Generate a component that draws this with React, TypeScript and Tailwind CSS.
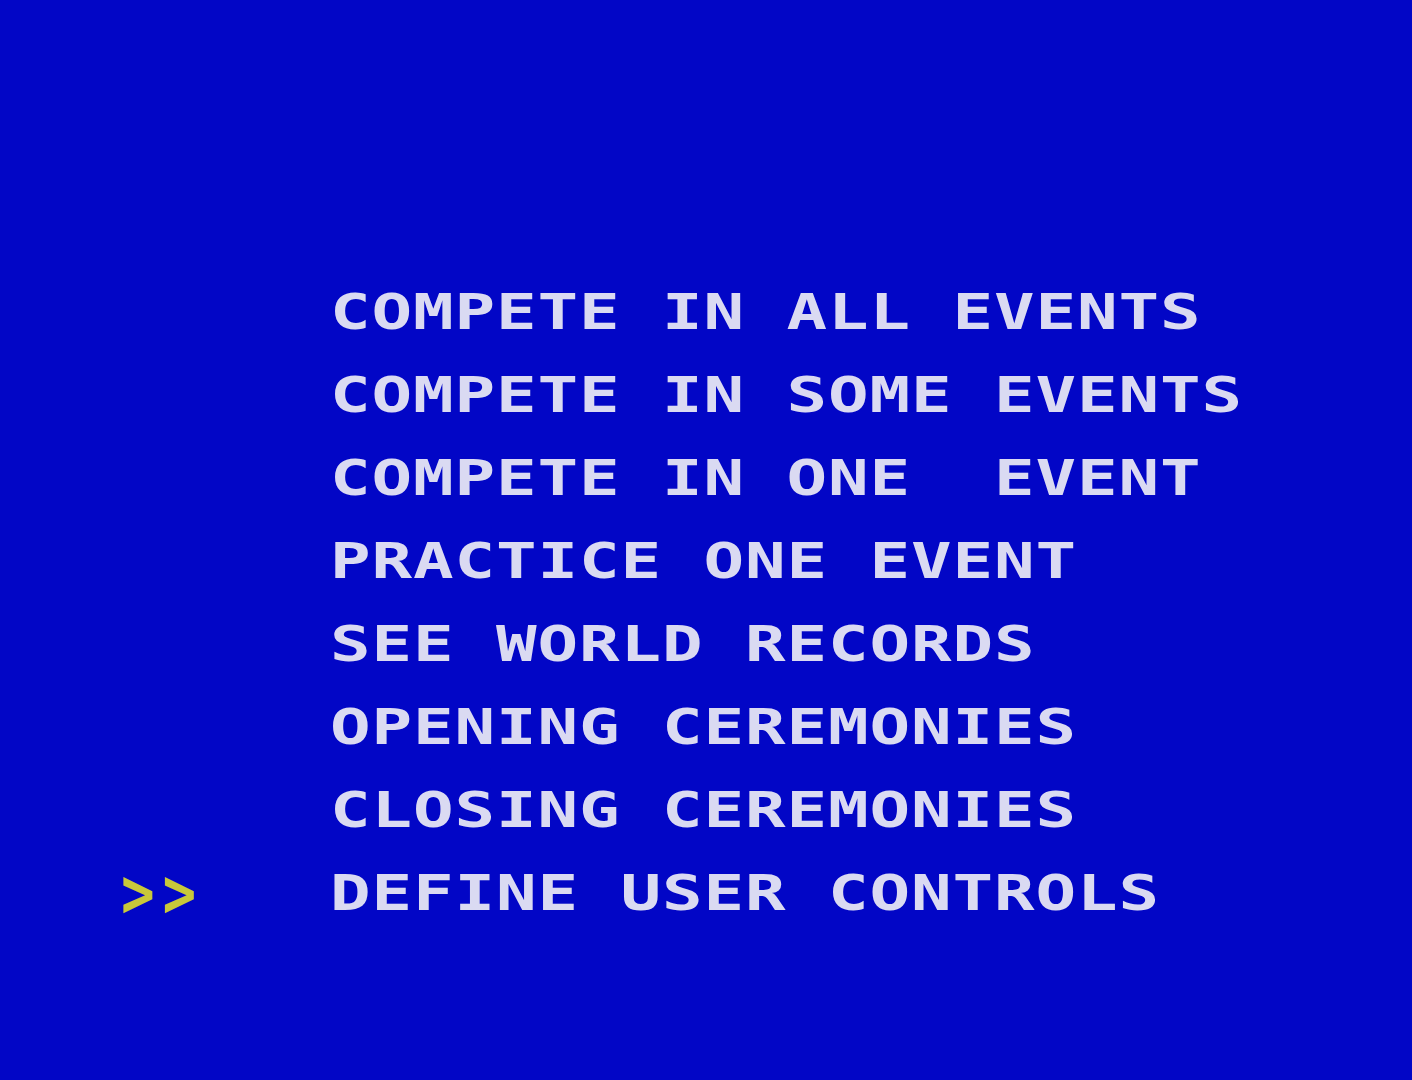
import { FC } from "react";

const items = [
  "COMPETE IN ALL EVENTS",
  "COMPETE IN SOME EVENTS",
  "COMPETE IN ONE  EVENT",
  "PRACTICE ONE EVENT",
  "SEE WORLD RECORDS",
  "OPENING CEREMONIES",
  "CLOSING CEREMONIES",
  "DEFINE USER CONTROLS",
];

const selected = 7;

const mono = "[font-family:'DejaVu_Sans_Mono','Liberation_Mono',monospace]";

// wide blocky glyphs: bold mono stretched horizontally to fill an 8x8 cell
const glyph = `inline-block origin-left scale-x-[1.35] whitespace-pre font-bold text-[50px] leading-none tracking-[0.64px] ${mono}`;

// cursor chevrons are taller and narrower than the menu letters
const cursor = `inline-block origin-left scale-x-[0.8] whitespace-pre font-bold text-[70px] leading-none tracking-[9.8px] ${mono}`;

const App: FC = () => (
  <div className="w-[1412px] h-[1080px] overflow-hidden bg-[#0206c6] pt-[270px]">
    <ul className="flex flex-col">
      {items.map((label, i) => (
        <li key={label} className="flex h-[83px] items-center">
          <div className="flex w-[330px] items-center pl-[121px]">
            {i === selected && <span className={`${cursor} text-[#c8c83a]`}>&gt;&gt;</span>}
          </div>
          <span className={`${glyph} text-[#dadaf2]`}>{label}</span>
        </li>
      ))}
    </ul>
  </div>
);

export default App;
